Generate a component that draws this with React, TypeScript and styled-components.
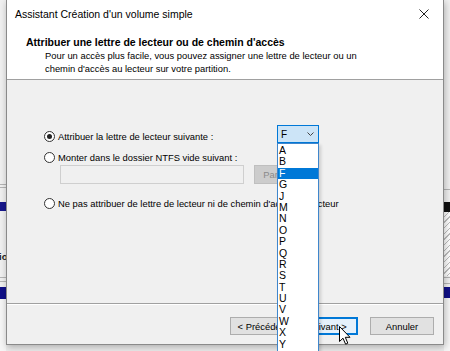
import React from "react";
import styled, { createGlobalStyle } from "styled-components";

const GlobalStyle = createGlobalStyle`
  * { box-sizing: border-box; }
  html, body { margin: 0; padding: 0; overflow: hidden; background: #efefef; }
  body { font-family: "Liberation Sans", Arial, sans-serif; color: #000; }
`;

const LETTERS = ["A", "B", "F", "G", "J", "M", "N", "O", "P", "Q", "R", "S", "T", "U", "V", "W", "X", "Y"];

const App: React.FC = () => {
  return (
    <>
      <GlobalStyle />
      <Desktop>
        <Strip $col={1}>
          <Gap $h={184} />
          <Rule />
          <Gap $h={2} />
          <Rule />
          <Gap $h={14} />
          <Bar $h={9} $color="#17178c" />
          <Gap $h={40} />
          <BehindText>io</BehindText>
          <Gap $h={14} />
          <Rule />
          <Gap $h={3} />
          <Rule />
          <Gap $h={5} />
          <Bar $h={12} $color="#101088" />
          <Fill />
        </Strip>

        <Dialog>
          <TitleBar>
            <span>Assistant Création d'un volume simple</span>
            <svg width="10" height="10" viewBox="0 0 10 10">
              <path d="M0.5 0.5 L9.5 9.5 M9.5 0.5 L0.5 9.5" stroke="#222" strokeWidth="1" fill="none" />
            </svg>
          </TitleBar>

          <Header>
            <HeaderTitle>Attribuer une lettre de lecteur ou de chemin d'accès</HeaderTitle>
            <HeaderText>
              Pour un accès plus facile, vous pouvez assigner une lettre de lecteur ou un
              <br />
              chemin d'accès au lecteur sur votre partition.
            </HeaderText>
          </Header>

          <Body>
            <LetterRow>
              <Option>
                <Radio $checked />
                Attribuer la lettre de lecteur suivante :
              </Option>
              <Combo>
                <span>F</span>
                <svg width="7" height="4" viewBox="0 0 7 4">
                  <polyline points="0.5,0.5 3.5,3.5 6.5,0.5" stroke="#444" strokeWidth="1" fill="none" />
                </svg>
                <DropList>
                  {LETTERS.map((l) => (
                    <DropItem key={l} $selected={l === "F"}>
                      {l}
                    </DropItem>
                  ))}
                </DropList>
              </Combo>
            </LetterRow>

            <Option $top={7}>
              <Radio />
              Monter dans le dossier NTFS vide suivant :
            </Option>
            <FolderRow>
              <PathField />
              <BrowseButton disabled>Parcourir...</BrowseButton>
            </FolderRow>

            <Option $top={12}>
              <Radio />
              Ne pas attribuer de lettre de lecteur ni de chemin d'accès au lecteur
            </Option>
          </Body>

          <Footer>
            <Button $w={66}>&lt; Précédent</Button>
            <Button $w={62} $default>
              Suivant &gt;
              <Cursor width="12" height="19" viewBox="0 0 12 19">
                <path
                  d="M0.5 0.5 L0.5 15.5 L4 12.2 L6.6 18.2 L8.8 17.2 L6.3 11.3 L11 11.3 Z"
                  fill="#fff"
                  stroke="#000"
                  strokeWidth="1"
                  strokeLinejoin="miter"
                />
              </Cursor>
            </Button>
            <Button $w={64} $gap={12}>Annuler</Button>
          </Footer>
        </Dialog>

        <Strip $col={3}>
          <Gap $h={189} />
          <Rule />
          <Gap $h={12} />
          <Bar $h={10} $color="#111" />
          <Hatch />
          <Gap $h={1} />
          <Rule />
          <Gap $h={5} />
          <Rule />
          <Gap $h={3} />
          <Bar $h={11} $color="#101088" />
          <Fill />
        </Strip>
      </Desktop>
    </>
  );
};

const Desktop = styled.div`
  width: 450px;
  height: 351px;
  overflow: hidden;
  display: grid;
  grid-template-columns: 6px 438px 6px;
  grid-template-rows: 345px 6px;
  background: #ececec;
`;

const Strip = styled.div<{ $col: number }>`
  grid-column: ${(p) => p.$col};
  grid-row: 1 / 3;
  display: flex;
  flex-direction: column;
  overflow: hidden;
  background: #f0f0f0;
`;

const Gap = styled.div<{ $h: number }>`
  flex: 0 0 ${(p) => p.$h}px;
`;

const Rule = styled.div`
  flex: 0 0 1px;
  background: #b4b4b4;
`;

const Bar = styled.div<{ $h: number; $color: string }>`
  flex: 0 0 ${(p) => p.$h}px;
  background: ${(p) => p.$color};
`;

const Hatch = styled.div`
  flex: 0 0 64px;
  background: repeating-linear-gradient(135deg, #fff 0 3px, #bdbdbd 3px 4px);
`;

const Fill = styled.div`
  flex: 1;
  background: #f6f6f6;
`;

const BehindText = styled.div`
  flex: 0 0 12px;
  font-size: 9.5px;
  font-weight: bold;
  line-height: 12px;
  color: #222;
  white-space: nowrap;
  margin-left: -1px;
`;

const Dialog = styled.section`
  grid-column: 2;
  grid-row: 1;
  position: relative;
  z-index: 1;
  display: flex;
  flex-direction: column;
  background: #f0f0f0;
  border: 1px solid #8a8a8a;
  border-top: none;
  box-shadow: 1px 2px 7px rgba(0, 0, 0, 0.28);
`;

const TitleBar = styled.div`
  flex: 0 0 28px;
  display: flex;
  align-items: center;
  justify-content: space-between;
  padding: 0 14px 0 8px;
  background: #fff;
  font-size: 10.5px;
`;

const Header = styled.header`
  flex: 0 0 52px;
  background: #fff;
  border-bottom: 1px solid #a0a0a0;
  padding: 8px 0 0 19px;
`;

const HeaderTitle = styled.div`
  font-size: 10.5px;
  font-weight: bold;
  line-height: 13px;
  height: 14px;
`;

const HeaderText = styled.div`
  font-size: 9.4px;
  line-height: 12.5px;
  padding-left: 19px;
`;

const Body = styled.div`
  flex: 1;
  display: flex;
  flex-direction: column;
  align-items: flex-start;
  padding: 45px 0 0 37px;
  font-size: 9.4px;
`;

const LetterRow = styled.div`
  display: grid;
  grid-template-columns: 233px 42px;
  align-items: end;
  height: 18px;
`;

const Option = styled.label<{ $top?: number }>`
  display: flex;
  align-items: center;
  gap: 3px;
  height: 14px;
  margin-top: ${(p) => p.$top ?? 0}px;
  white-space: nowrap;
`;

const Radio = styled.span<{ $checked?: boolean }>`
  flex: 0 0 11px;
  height: 11px;
  border: 1px solid #333;
  border-radius: 50%;
  background: #fff;
  display: flex;
  align-items: center;
  justify-content: center;
  &::after {
    content: "";
    width: 5px;
    height: 5px;
    border-radius: 50%;
    background: ${(p) => (p.$checked ? "#222" : "transparent")};
  }
`;

const Combo = styled.div`
  position: relative;
  z-index: 5;
  height: 18px;
  display: flex;
  align-items: center;
  justify-content: space-between;
  padding: 0 4px 0 3px;
  background: #cce4f7;
  border: 1px solid #0078d7;
  font-size: 10px;
`;

const DropList = styled.div`
  position: absolute;
  top: 17px;
  left: -1px;
  width: 42px;
  height: 215px;
  padding: 1px 0;
  background: #fff;
  border: 1px solid #3f86cc;
  box-shadow: 2px 2px 3px rgba(0, 0, 0, 0.15);
`;

const DropItem = styled.div<{ $selected?: boolean }>`
  height: 11.4px;
  line-height: 11.4px;
  padding-left: 1px;
  font-size: 10.5px;
  background: ${(p) => (p.$selected ? "#0078d7" : "transparent")};
  color: ${(p) => (p.$selected ? "#fff" : "#000")};
`;

const FolderRow = styled.div`
  display: flex;
  gap: 10px;
  height: 19px;
  margin: 1px 0 0 16px;
`;

const PathField = styled.div`
  width: 184px;
  border: 1px solid #cfcfcf;
  background: #f0f0f0;
`;

const BrowseButton = styled.button`
  width: 64px;
  padding: 0;
  border: 1px solid #bfbfbf;
  background: #cccccc;
  color: #8a8a8a;
  font: inherit;
  font-size: 9.4px;
`;

const Footer = styled.footer`
  flex: 0 0 41px;
  display: flex;
  justify-content: flex-end;
  align-items: flex-start;
  padding: 13px 9px 0 0;
  border-top: 1px solid #a0a0a0;
  box-shadow: inset 0 1px 0 #fff;
`;

const Button = styled.button<{ $w: number; $default?: boolean; $gap?: number }>`
  position: relative;
  width: ${(p) => p.$w}px;
  height: 18px;
  margin-left: ${(p) => p.$gap ?? 0}px;
  padding: 0;
  font-family: inherit;
  font-size: 9.4px;
  color: #000;
  background: ${(p) => (p.$default ? "#e5f1fb" : "#e1e1e1")};
  border: 1px solid ${(p) => (p.$default ? "#0078d7" : "#adadad")};
  box-shadow: ${(p) => (p.$default ? "inset 0 0 0 1px #0078d7" : "none")};
`;

const Cursor = styled.svg`
  position: absolute;
  left: 42px;
  top: 8px;
`;

export default App;
